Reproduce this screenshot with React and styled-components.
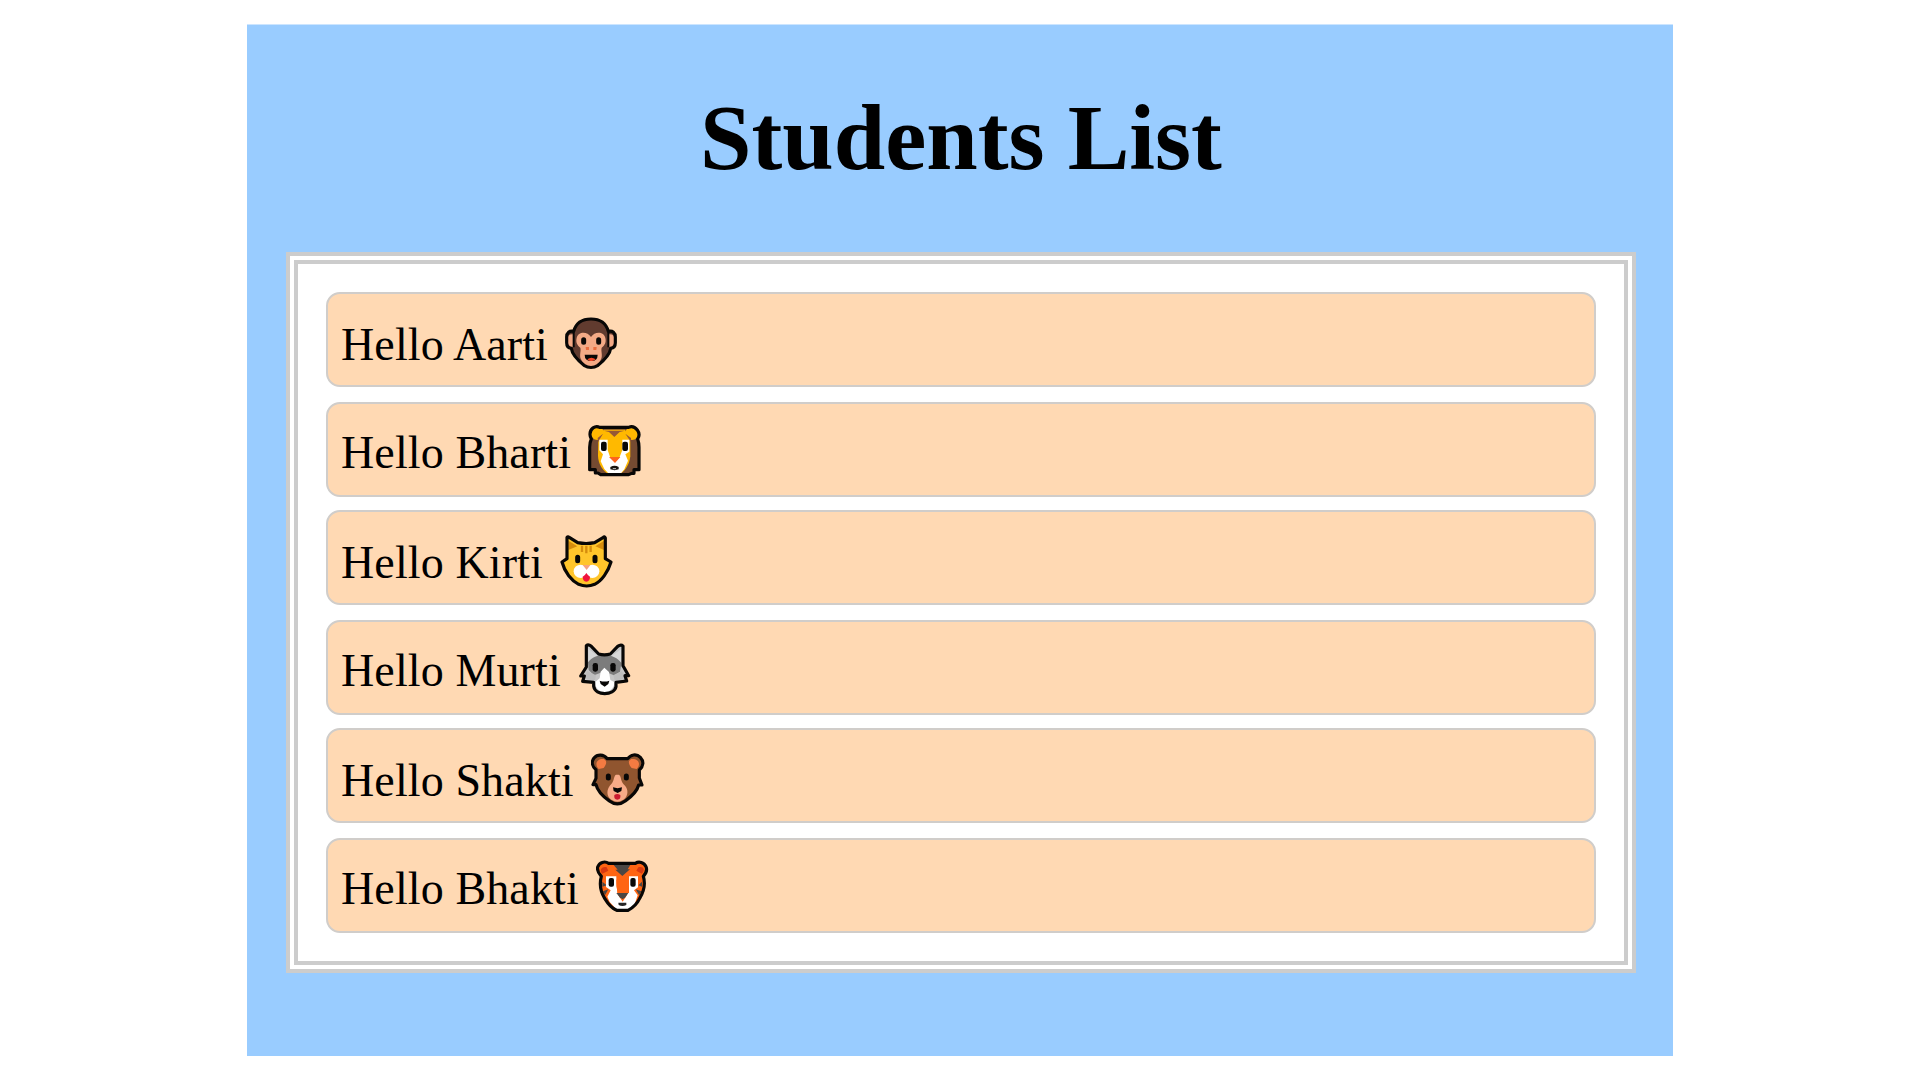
import React from 'react';
import styled, { createGlobalStyle } from 'styled-components';

const GlobalStyle = createGlobalStyle`
  * { box-sizing: border-box; }
  body { margin: 0; background: #fff; }
`;

const Page = styled.div`
  height: 1080px;
  padding: 24px 0 0 247px;
  font-family: 'Liberation Serif', 'Times New Roman', serif;
  color: #000;
`;

const Panel = styled.main`
  width: 1426px;
  height: 1032px;
  padding: 61px 37px 0 39px;
  background: #99ccff;
  border-top: 1px solid #cce5ff;
`;

const Title = styled.h1`
  margin: 0 0 62px;
  height: 104px;
  line-height: 104px;
  font-size: 92.5px;
  font-weight: 700;
  text-align: center;
  white-space: nowrap;
`;

const List = styled.ul`
  margin: 0;
  height: 721px;
  padding: 28px 28px 28px;
  list-style: none;
  background: #fff;
  border: 12px double #ccc;
`;

const Item = styled.li`
  display: flex;
  align-items: flex-start;
  height: 95px;
  margin-bottom: ${(p) => p.$gap}px;
  padding: ${(p) => p.$pad}px 13px 0;
  background: #ffd9b3;
  border: 2px solid #d0cdca;
  border-radius: 14px;
`;

const Greeting = styled.span`
  font-size: 46px;
  line-height: 52px;
  letter-spacing: 0.12px;
  white-space: nowrap;
`;

const Face = styled.svg`
  flex: none;
  width: 55px;
  height: 54px;
  margin: ${(p) => p.$drop}px 0 0 ${(p) => p.$space}px;
`;

const Head = ({ shape, color, children }) => (
  <>
    <path d={shape} fill={color} />
    {children}
    <path d={shape} fill="none" stroke="#080706" strokeWidth="9.5" strokeLinejoin="round" />
  </>
);

const Monkey = () => (
  <Head
    shape="M123 42C98 42 78 54 71 79C58 76 50 83 50 96V113C50 122 54 129 64 130C66 147 84 166 102 181Q123 194 144 181C162 166 180 147 182 130C192 129 196 122 196 113V96C196 83 188 76 175 79C168 54 148 42 123 42Z"
    color="#613b2f"
  >
    <path d="M70 88Q52 86 53 104Q51 126 70 126ZM176 88Q194 86 193 104Q195 126 176 126Z" fill="#f4aa86" />
    <path d="M71 82V127M175 82V127" stroke="#080706" strokeWidth="6" />
    <path d="M123 96C112 78 84 79 80 99C77 112 81 120 91 128C94 138 87 151 93 163C101 180 109 186 123 186C137 186 145 180 153 163C159 151 152 138 155 128C165 120 169 112 166 99C162 79 134 78 123 96Z" fill="#f4aa86" />
    <path d="M101 104V112M146 104V112" stroke="#0b0907" strokeWidth="15" strokeLinecap="round" />
    <path d="M107 126h10v9h-9zM130 126h10l-1 9h-9z" fill="#ea6f40" />
    <path d="M104 149H143Q143 168 124 168Q104 168 104 149Z" fill="#080706" />
    <path d="M112 163Q124 154 137 163Q131 169 124 168Q116 169 112 163Z" fill="#f04425" />
  </Head>
);

const Lion = () => (
  <Head
    shape="M77 43C64 36 47 47 48 65C48 70 50 74 52 78Q47 88 47 103V170H64V180H72L80 185H164L173 181H180V170H195V103Q195 89 191 78C196 70 196 59 190 51C182 41 171 40 164 43Z"
    color="#754b32"
  >
    <circle cx="70" cy="61" r="20" fill="#ffb800" />
    <circle cx="174" cy="61" r="20" fill="#ffb800" />
    <path d="M73 80L89 50H153L169 80V130C166 158 151 176 136 185H106C87 175 73 154 72 128Z" fill="#ffb900" />
    <path d="M90 53H152L137 57L121 72L105 57ZM71 75L87 62L72 88ZM171 75L154 62L171 88Z" fill="#965835" />
    <path d="M76 80H101V111L109 134L123 147L136 134L145 111V80H166V116L154 124L162 143L151 169L137 185H107L91 168L80 145L87 124L76 112Z" fill="#fff" />
    <path d="M105 132H139L123 150Z" fill="#fd641c" />
    <rect x="81" y="86" width="17" height="28" rx="6" fill="#090807" />
    <rect x="145" y="86" width="17" height="28" rx="6" fill="#090807" />
    <path d="M109 162Q122 155 134 162V169Q122 174 109 169Z" fill="#171310" />
    <path d="M116 165H126V169H117Z" fill="#aaa" />
  </Head>
);

const Cat = () => (
  <Head
    shape="M60 40Q63 36 68 41L92 56Q117 61 143 56L168 41Q173 36 175 42V104L192 114C183 144 164 171 143 181Q119 191 95 181C74 170 53 145 45 114L60 104Z"
    color="#ffc52b"
  >
    <path d="M64 50L91 67L64 78ZM171 50L145 67L171 78Z" fill="#d58c0c" />
    <path d="M105 65V84M118 65V88M131 65V84" stroke="#d58c0c" strokeWidth="7" />
    <path d="M92 100V110M144 100V110" stroke="#080706" strokeWidth="15" strokeLinecap="round" />
    <ellipse cx="101" cy="142" rx="21" ry="20" fill="#fff" />
    <ellipse cx="136" cy="142" rx="21" ry="20" fill="#fff" />
    <path d="M107 123H130L119 138Z" fill="#f8a27e" />
    <path d="M118 147Q123 155 129 158Q129 171 118 173Q107 171 107 158Q114 155 118 147Z" fill="#f0133d" />
  </Head>
);

const Wolf = () => (
  <Head
    shape="M64 41Q70 36 79 43L101 66Q118 71 136 66L158 43Q168 36 174 42V101L191 131H180L185 147L153 151V164C147 192 91 192 86 163V151L53 148L58 132H47L64 105Z"
    color="#c6c6c6"
  >
    <path d="M70 50L99 73L88 83L70 95ZM170 50L138 73L151 83L170 95Z" fill="#d8d8d8" />
    <path d="M69 91C81 76 97 69 118 69C140 69 159 78 169 93L165 119L147 130L128 122H107L87 130L71 114Z" fill="#7c7c7c" />
    <path d="M67 117L93 130L90 145L66 142L60 130ZM170 118L145 130L149 145L174 142L178 130Z" fill="#bdbdbd" />
    <path d="M118 107L132 120L136 144L149 151C145 190 92 190 90 151L104 139L107 119Z" fill="#fff" />
    <rect x="83" y="93" width="16" height="26" rx="7" fill="#090807" />
    <rect x="136" y="93" width="16" height="26" rx="7" fill="#090807" />
    <path d="M104 146Q119 151 133 146L130 156L119 164L107 156Z" fill="#080706" />
  </Head>
);

const Bear = () => (
  <Head
    shape="M88 50C77 36 58 36 48 48C39 60 43 74 54 83V109L45 128H54C59 149 76 164 93 176Q118 195 143 176C161 163 177 149 182 129H192L184 108V84C197 72 198 58 187 46C175 34 158 38 149 50Z"
    color="#90552f"
  >
    <path d="M62 81C47 64 59 49 77 51C88 56 86 66 77 78ZM176 81C191 64 180 49 160 51C149 56 151 66 161 78Z" fill="#f47b42" />
    <path d="M114 98C107 101 109 116 100 126C88 138 84 155 94 168Q118 191 142 168C153 154 149 137 136 126C127 114 130 101 122 98Z" fill="#f8ab88" />
    <path d="M91 102V108M145 102V108" stroke="#080706" strokeWidth="15" strokeLinecap="round" />
    <path d="M105 136Q119 141 132 136L130 147L119 153L107 147Z" fill="#080706" />
    <path d="M109 159Q118 153 127 159Q129 173 118 173Q107 173 109 159Z" fill="#cb192f" />
  </Head>
);

const Tiger = () => (
  <Head
    shape="M77 43C65 35 49 40 44 54C41 67 48 74 55 82C49 104 54 130 65 148C74 163 84 177 101 184H135C154 174 163 163 170 148C181 130 188 105 181 82C189 73 194 64 189 53C183 40 168 36 157 43Z"
    color="#ff6513"
  >
    <path d="M58 74C46 61 60 50 71 55L76 65ZM176 74C190 61 179 50 166 55L160 65Z" fill="#d93a12" />
    <path d="M92 48H142L134 61H141L118 81L97 62H104ZM58 98L71 109L58 113ZM177 98L166 109L177 113ZM60 127L76 121L66 139ZM175 127L158 121L169 139Z" fill="#4b4744" />
    <path d="M69 82H100V112L106 139L119 158L132 138L138 112V82H165V115L153 124L164 139L155 166L135 184H103L80 159L73 143L83 124L69 114Z" fill="#fff" />
    <path d="M100 92H138V132H103Z" fill="#ff6513" />
    <path d="M100 132H136L127 145L119 151L110 145Z" fill="#4b4744" />
    <rect x="77" y="87" width="16" height="26" rx="6" fill="#090807" />
    <rect x="142" y="87" width="16" height="26" rx="6" fill="#090807" />
    <path d="M106 161H130V168Q118 174 107 168Z" fill="#252525" />
  </Head>
);

const students = [
  { name: 'Aarti', Animal: Monkey, pad: 25, drop: -3, space: 15, gap: 15 },
  { name: 'Bharti', Animal: Lion, pad: 23, drop: -3, space: 16, gap: 13 },
  { name: 'Kirti', Animal: Cat, pad: 25, drop: -2, space: 17, gap: 15 },
  { name: 'Murti', Animal: Wolf, pad: 23, drop: -2, space: 17, gap: 13 },
  { name: 'Shakti', Animal: Bear, pad: 25, drop: -2, space: 17, gap: 15 },
  { name: 'Bhakti', Animal: Tiger, pad: 23, drop: -3, space: 17, gap: 0 },
];

export default function App() {
  return (
    <Page>
      <GlobalStyle />
      <Panel>
        <Title>Students List</Title>
        <List>
          {students.map(({ name, Animal, pad, drop, space, gap }) => (
            <Item key={name} $pad={pad} $gap={gap}>
              <Greeting>Hello {name}</Greeting>
              <Face $drop={drop} $space={space} viewBox="39 33 165 162" aria-hidden="true">
                <Animal />
              </Face>
            </Item>
          ))}
        </List>
      </Panel>
    </Page>
  );
}
